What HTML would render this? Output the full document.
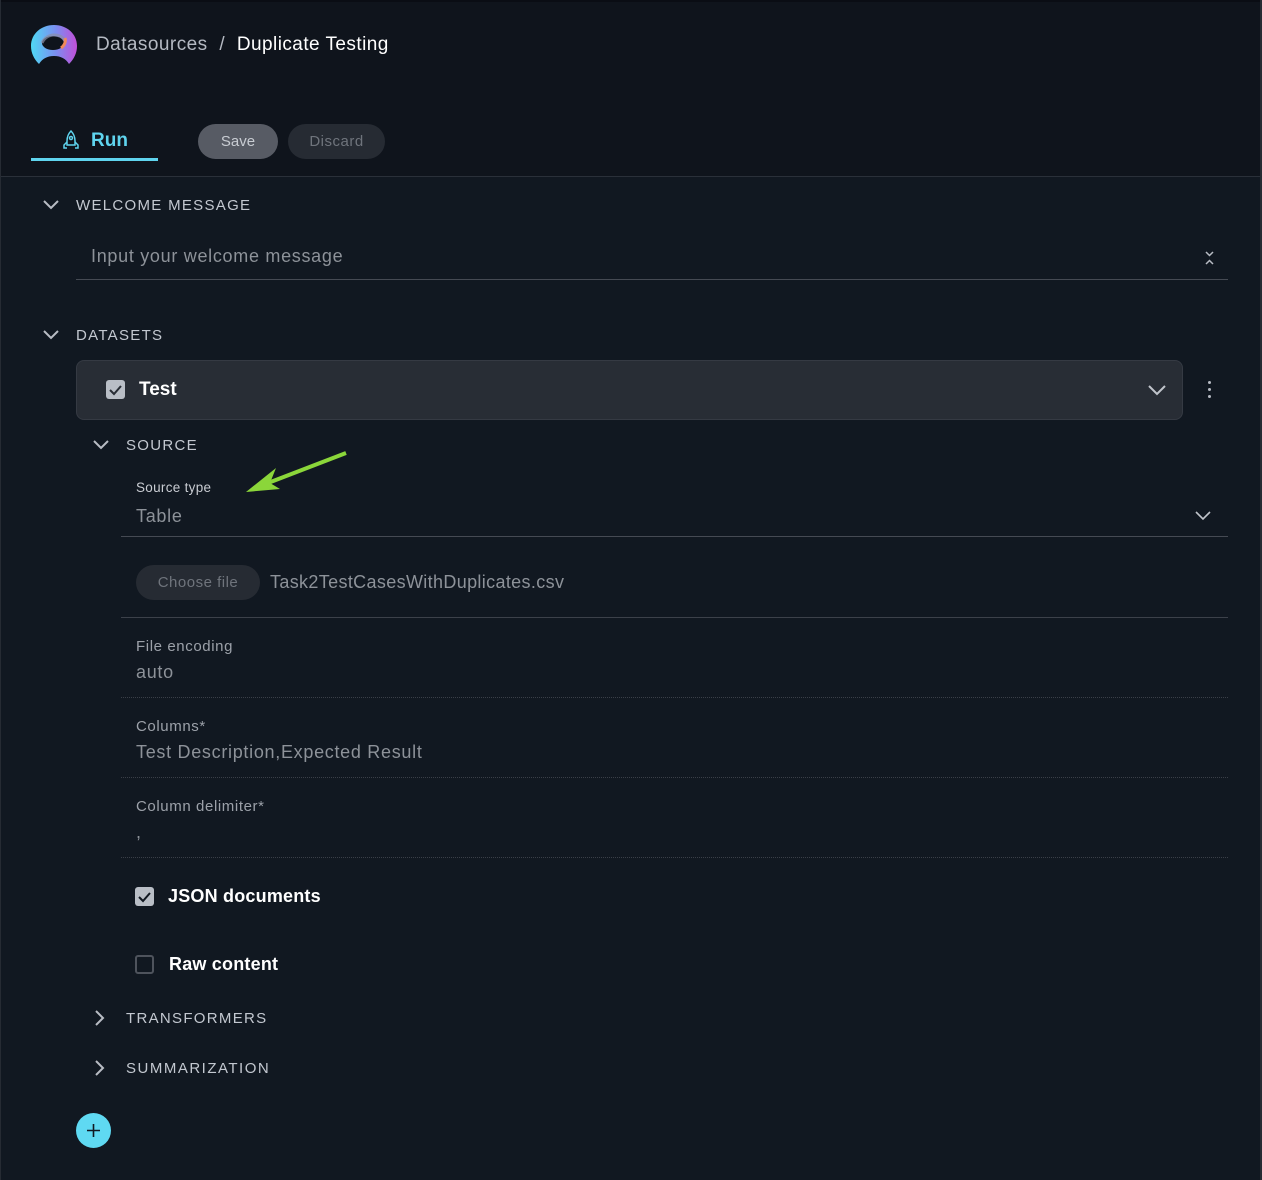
<!DOCTYPE html>
<html><head><meta charset="utf-8"><style>
*{margin:0;padding:0;box-sizing:border-box}
body{width:1262px;height:1180px;background:#111821;font-family:"Liberation Sans",sans-serif;position:relative;overflow:hidden;color:#c9ccd2}
.a{position:absolute;white-space:nowrap}
.hdr{position:absolute;left:0;top:0;width:1262px;height:177px;background:#0f141c;border-bottom:1px solid #2a3039;border-top:2px solid #0a0d14}
.sec{font-size:15px;letter-spacing:1.3px;color:#c3c8d0}
.lbl{font-size:15px;color:#9ca1a9;letter-spacing:.6px}
.val{font-size:18px;color:#8d9299;letter-spacing:.7px}
.dl{position:absolute;left:121px;width:1107px;border-top:1px dotted #3a3f48}
.cb{position:absolute;width:19px;height:19px;border-radius:3px}
</style></head><body>
<div class="hdr"></div>
<div class="a" style="left:0;top:0;width:1px;height:1180px;background:#262b33"></div>
<div class="a" style="left:1260px;top:0;width:2px;height:1180px;background:#262b33"></div>
<svg class="a" style="left:30px;top:24px" width="48" height="42" viewBox="0 0 48 42">
<defs><linearGradient id="g" x1="0" y1="0" x2="1" y2="0"><stop offset="0" stop-color="#4fd9f4"/><stop offset=".55" stop-color="#7c8df0"/><stop offset="1" stop-color="#c24fd8"/></linearGradient></defs>
<path d="M24 1C11 1 1 10 1 22c0 7 3 13 8 18c3-5 8-8 15-8s12 3 15 8c5-5 8-11 8-18C47 10 37 1 24 1z" fill="url(#g)"/>
<ellipse cx="23" cy="19" rx="11" ry="7" fill="#0f141c"/>
<path d="M12 19c2-5 7-8 12-8s9 2 11 6" fill="none" stroke="#8a8fa8" stroke-width="3" opacity=".7"/>
<path d="M35 14c1 3 0 7-4 10" stroke="#f08a5a" stroke-width="3" fill="none"/>
</svg>
<div class="a" style="left:96px;top:34px;font-size:19px;color:#b4b9c2;letter-spacing:.45px">Datasources <span style="margin:0 6px">/</span> <span style="color:#fff">Duplicate Testing</span></div>
<svg class="a" style="left:62px;top:130px" width="18" height="20" viewBox="0 0 18 20" fill="none" stroke="#5fd4ee" stroke-width="1.5"><path d="M9 1c3 3 4 6 4 10v4H5v-4c0-4 1-7 4-10z"/><path d="M5 12l-3 3v3h3M13 12l3 3v3h-3"/><circle cx="9" cy="8" r="1.5"/></svg>
<div class="a" style="left:91px;top:130px;font-size:19px;color:#5fd4ee;font-weight:bold">Run</div>
<div class="a" style="left:31px;top:158px;width:127px;height:3px;background:#5fd4ee"></div>
<div class="a" style="left:198px;top:124px;width:80px;height:35px;border-radius:18px;background:#575b64;color:#c8ccd2;font-size:15px;text-align:center;line-height:35px">Save</div>
<div class="a" style="left:288px;top:124px;width:97px;height:35px;border-radius:18px;background:#262b33;color:#6f747c;font-size:15px;text-align:center;line-height:35px;letter-spacing:.5px">Discard</div>

<svg class="a" style="left:42px;top:199px" width="18" height="12" viewBox="0 0 18 12"><path d="M2 2l7 7 7-7" stroke="#b8bcc4" stroke-width="2" fill="none"/></svg>
<div class="a sec" style="left:76px;top:197px">WELCOME MESSAGE</div>
<div class="a val" style="left:91px;top:246px">Input your welcome message</div>
<svg class="a" style="left:1204px;top:250px" width="11" height="16" viewBox="0 0 11 16"><path d="M2 2l3.5 3.5L9 2M2 14l3.5-3.5L9 14" stroke="#b8bcc4" stroke-width="1.5" fill="none"/></svg>
<div class="a" style="left:76px;top:279px;width:1152px;height:1px;background:#454a53"></div>

<svg class="a" style="left:42px;top:329px" width="18" height="12" viewBox="0 0 18 12"><path d="M2 2l7 7 7-7" stroke="#b8bcc4" stroke-width="2" fill="none"/></svg>
<div class="a sec" style="left:76px;top:327px">DATASETS</div>
<div class="a" style="left:76px;top:360px;width:1107px;height:60px;border-radius:8px;background:#282d35;border:1px solid #353a43"></div>
<div class="cb" style="left:106px;top:380px;background:#b9bec6"><svg width="19" height="19"><path d="M4 10l4 4 7-8" stroke="#282d35" stroke-width="2" fill="none"/></svg></div>
<div class="a" style="left:139px;top:379px;font-size:19px;font-weight:bold;color:#fff">Test</div>
<svg class="a" style="left:1147px;top:383px" width="20" height="14" viewBox="0 0 20 14"><path d="M2 3l8 8 8-8" stroke="#c0c4cb" stroke-width="2" fill="none"/></svg>
<div class="a" style="left:1208px;top:381px;width:3px;height:3px;background:#b8bcc4;border-radius:2px;box-shadow:0 7px #b8bcc4,0 14px #b8bcc4"></div>

<svg class="a" style="left:92px;top:439px" width="18" height="12" viewBox="0 0 18 12"><path d="M2 2l7 7 7-7" stroke="#b8bcc4" stroke-width="2" fill="none"/></svg>
<div class="a sec" style="left:126px;top:437px">SOURCE</div>
<svg class="a" style="left:244px;top:450px" width="106" height="46" viewBox="0 0 106 46"><path d="M102 3L24 33" stroke="#8bd63a" stroke-width="4"/><path d="M2 42l30-24-6 15 10 6z" fill="#8bd63a"/></svg>
<div class="a" style="left:136px;top:480px;font-size:13.5px;color:#c9ccd2;letter-spacing:.3px">Source type</div>
<div class="a val" style="left:136px;top:506px">Table</div>
<svg class="a" style="left:1194px;top:509px" width="18" height="12" viewBox="0 0 18 12"><path d="M2 3l7 7 7-7" stroke="#c0c4cb" stroke-width="1.6" fill="none"/></svg>
<div class="a" style="left:121px;top:536px;width:1107px;height:1px;background:#454a53"></div>

<div class="a" style="left:136px;top:565px;width:124px;height:35px;border-radius:18px;background:#262b33;color:#6f747c;font-size:15px;text-align:center;line-height:35px;letter-spacing:.5px">Choose file</div>
<div class="a val" style="left:270px;top:572px;letter-spacing:.35px">Task2TestCasesWithDuplicates.csv</div>
<div class="a" style="left:121px;top:617px;width:1107px;height:1px;background:#3c414a"></div>

<div class="a lbl" style="left:136px;top:638px">File encoding</div>
<div class="a val" style="left:136px;top:662px">auto</div>
<div class="dl" style="top:697px"></div>
<div class="a lbl" style="left:136px;top:718px">Columns*</div>
<div class="a val" style="left:136px;top:742px">Test Description,Expected Result</div>
<div class="dl" style="top:777px"></div>
<div class="a lbl" style="left:136px;top:798px">Column delimiter*</div>
<div class="a val" style="left:136px;top:822px">,</div>
<div class="dl" style="top:857px"></div>

<div class="cb" style="left:135px;top:887px;background:#b9bec6"><svg width="19" height="19"><path d="M4 10l4 4 7-8" stroke="#111821" stroke-width="2" fill="none"/></svg></div>
<div class="a" style="left:168px;top:886px;font-size:18px;font-weight:bold;color:#fff;letter-spacing:.2px">JSON documents</div>
<div class="cb" style="left:135px;top:955px;border:2px solid #4e535c"></div>
<div class="a" style="left:169px;top:954px;font-size:18px;font-weight:bold;color:#fff;letter-spacing:.2px">Raw content</div>

<svg class="a" style="left:94px;top:1009px" width="12" height="18" viewBox="0 0 12 18"><path d="M2 2l7 7-7 7" stroke="#b8bcc4" stroke-width="2" fill="none"/></svg>
<div class="a sec" style="left:126px;top:1010px">TRANSFORMERS</div>
<svg class="a" style="left:94px;top:1059px" width="12" height="18" viewBox="0 0 12 18"><path d="M2 2l7 7-7 7" stroke="#b8bcc4" stroke-width="2" fill="none"/></svg>
<div class="a sec" style="left:126px;top:1060px;letter-spacing:1.5px">SUMMARIZATION</div>

<div class="a" style="left:76px;top:1113px;width:35px;height:35px;border-radius:50%;background:#5fd9f2"></div>
<svg class="a" style="left:86px;top:1123px" width="15" height="15"><path d="M7.5 1v13M1 7.5h13" stroke="#111821" stroke-width="1.6"/></svg>
</body></html>
